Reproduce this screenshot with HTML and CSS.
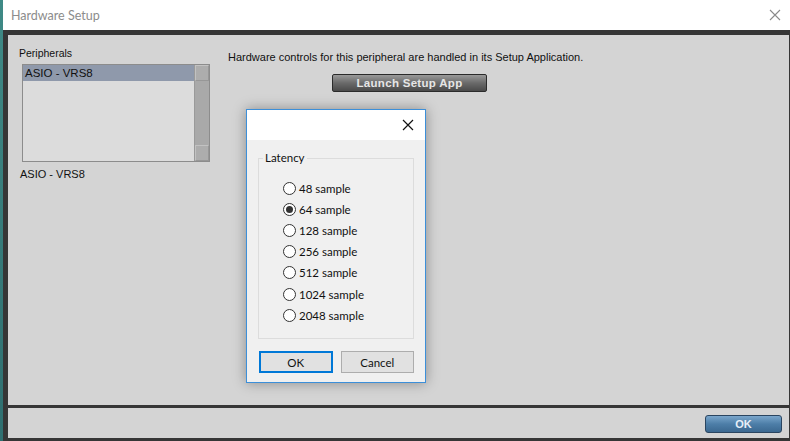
FILE: index.html
```html
<!DOCTYPE html>
<html>
<head>
<meta charset="utf-8">
<link rel="stylesheet" href="styles.css">
</head>
<body>
<div class="window">
  <div class="titlebar">
    <span class="title">Hardware Setup</span>
    <svg class="close" width="12" height="12" viewBox="0 0 12 12"><path d="M1 1 L11 11 M11 1 L1 11" stroke="#8a8a8a" stroke-width="1.1" fill="none"/></svg>
  </div>
  <div class="frame">
    <div class="main">
      <div class="left">
        <div class="label">Peripherals</div>
        <div class="listbox">
          <div class="items">
            <div class="item selected">ASIO - VRS8</div>
          </div>
          <div class="scrollbar">
            <div class="sb-btn"></div>
            <div class="sb-track"></div>
            <div class="sb-btn"></div>
          </div>
        </div>
        <div class="label current">ASIO - VRS8</div>
      </div>
      <div class="right">
        <div class="info">Hardware controls for this peripheral are handled in its Setup Application.</div>
        <button class="launch">Launch Setup App</button>
      </div>

      <div class="dialog">
        <div class="dlg-title">
          <svg class="dlg-close" width="12" height="12" viewBox="0 0 12 12"><path d="M1 1 L11 11 M11 1 L1 11" stroke="#111" stroke-width="1.2" fill="none"/></svg>
        </div>
        <div class="dlg-body">
          <fieldset class="group">
            <legend>Latency</legend>
            <div class="radios">
              <label class="radio"><span class="circle"></span>48 sample</label>
              <label class="radio"><span class="circle checked"></span>64 sample</label>
              <label class="radio"><span class="circle"></span>128 sample</label>
              <label class="radio"><span class="circle"></span>256 sample</label>
              <label class="radio"><span class="circle"></span>512 sample</label>
              <label class="radio"><span class="circle"></span>1024 sample</label>
              <label class="radio"><span class="circle"></span>2048 sample</label>
            </div>
          </fieldset>
          <div class="dlg-buttons">
            <button class="wbtn default">OK</button>
            <button class="wbtn">Cancel</button>
          </div>
        </div>
      </div>
    </div>
    <div class="bottom">
      <button class="okbtn">OK</button>
    </div>
  </div>
</div>
</body>
</html>
```
FILE: styles.css
```css
* { box-sizing: border-box; }
html, body { margin: 0; padding: 0; }
body {
  width: 790px;
  height: 441px;
  overflow: hidden;
  background: linear-gradient(#3f8a86, #2f6f70);
  font-family: "Liberation Sans", Arial, sans-serif;
}
.window {
  margin-left: 3px;
  height: 441px;
  display: flex;
  flex-direction: column;
}
.titlebar {
  height: 30px;
  background: #fff;
  display: flex;
  align-items: center;
  justify-content: space-between;
  padding: 0 9px 0 8px;
}
.title {
  font-family: Lato, "Noto Sans", sans-serif;
  font-size: 12.5px;
  color: #8c8c8c;
}
.close { margin-top: -1px; }
.frame {
  flex: 1;
  background: #363636;
  padding: 5px 1px 3px 5px;
  display: flex;
  flex-direction: column;
  gap: 3px;
}
.main {
  position: relative;
  height: 370px;
  background: #d4d4d4;
  display: flex;
  padding: 12px 0 0 11px;
  font-size: 11px;
  color: #111;
}
.left { width: 209px; }
.label { height: 13px; line-height: 13px; font-size: 10.5px; }
.listbox {
  margin: 4px 0 0 3px;
  width: 188px;
  height: 98px;
  border: 1px solid #8c8c8c;
  background: #dcdcdc;
  display: flex;
}
.items { flex: 1; }
.item {
  height: 16px;
  line-height: 16px;
  padding-left: 2px;
  font-size: 11.5px;
}
.item.selected { background: #8f99ab; color: #111; }
.scrollbar {
  width: 15px;
  background: #a9a9a9;
  display: flex;
  flex-direction: column;
  border-left: 1px solid #9a9a9a;
}
.sb-btn {
  height: 16px;
  background: #adadad;
  border: 1px solid #c2c2c2;
  border-right-color: #979797;
  border-bottom-color: #979797;
}
.sb-track { flex: 1; }
.current { margin-top: 6px; font-size: 11px; margin-left: 1px; }
.right {
  display: flex;
  flex-direction: column;
  padding-top: 4px;
}
.info { height: 12px; line-height: 12px; }
.launch {
  margin: 11px 0 0 104px;
  width: 155px;
  height: 18px;
  border: 1px solid #2b2b2b;
  border-radius: 2px;
  background: linear-gradient(#9a9a9a, #6a6a6a 50%, #4a4a4a);
  color: #e6e6e6;
  font-family: "Liberation Sans", Arial, sans-serif;
  font-weight: bold;
  font-size: 11.5px;
  padding: 0;
  letter-spacing: 0.3px;
}
.dialog {
  position: absolute;
  left: 238px;
  top: 74px;
  width: 180px;
  height: 274px;
  border: 1px solid #3c8fd9;
  background: #f0f0f0;
  box-shadow: 0 0 12px rgba(0,0,0,0.35);
  font-family: Lato, "Noto Sans", sans-serif;
  font-size: 11.5px;
  color: #111;
  display: flex;
  flex-direction: column;
}
.dlg-title {
  height: 30px;
  background: #fff;
  display: flex;
  justify-content: flex-end;
  align-items: center;
  padding-right: 11px;
}
.dlg-body {
  padding: 12px 11px 0 11px;
  display: flex;
  flex-direction: column;
}
.group {
  margin: 0;
  height: 187px;
  border: 1px solid #dcdcdc;
  padding: 14px 0 0 0;
}
.group legend {
  padding: 0 2px;
  margin-left: 4px;
  line-height: 12px;
  font-size: 11.5px;
}
.radios {
  padding-left: 24px;
  display: flex;
  flex-direction: column;
}
.radio {
  display: flex;
  align-items: center;
  height: 21.1px;
  gap: 3px;
}
.circle {
  width: 13px;
  height: 13px;
  border: 1px solid #333;
  border-radius: 50%;
  background: #fff;
  display: flex;
  align-items: center;
  justify-content: center;
}
.circle.checked::after {
  content: "";
  width: 7px;
  height: 7px;
  border-radius: 50%;
  background: #333;
}
.dlg-buttons {
  margin-top: 12px;
  display: flex;
  gap: 8px;
  padding-left: 1px;
}
.wbtn {
  width: 74px;
  height: 22px;
  border: 1px solid #adadad;
  background: #e1e1e1;
  font-family: Lato, "Noto Sans", sans-serif;
  font-size: 11.5px;
  color: #111;
  padding: 0;
}
.wbtn.default { border: 2px solid #0078d7; }
.bottom {
  height: 30px;
  background: #d4d4d4;
  display: flex;
  justify-content: flex-end;
  align-items: center;
  padding-right: 7px;
}
.okbtn {
  width: 77px;
  height: 18px;
  border: 1px solid #2a4560;
  border-radius: 3px;
  background: linear-gradient(#7aa6cc, #4d7ea8 50%, #3b6890);
  color: #e8f0f8;
  font-family: "Liberation Sans", Arial, sans-serif;
  font-weight: bold;
  font-size: 11px;
  padding: 0;
  margin-top: 1px;
}
```
